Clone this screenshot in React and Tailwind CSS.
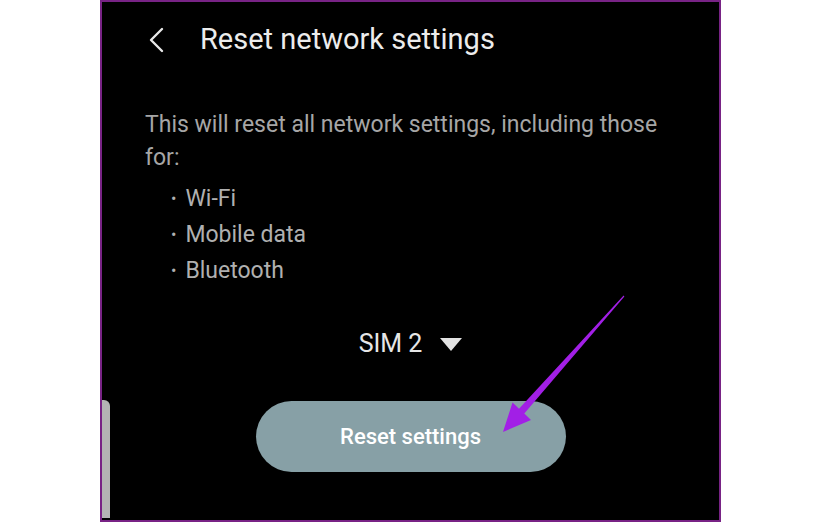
const App = () => {
  return (
    <div
      className="relative w-[822px] h-[522px] bg-white flex"
      style={{ fontFamily: "Roboto, 'Noto Sans', sans-serif" }}
    >
      {/* Phone screen */}
      <div className="relative ml-[100px] w-[621px] h-[522px] border-2 border-[#782385] bg-black flex flex-col">
        {/* Header */}
        <div className="h-[76px] flex items-center pl-[44px]">
          <svg width="22" height="28" viewBox="0 0 22 28" className="text-[#e8e8e8]">
            <path d="M16 3 L5 14 L16 25" fill="none" stroke="currentColor" strokeWidth="2.4" strokeLinecap="round" strokeLinejoin="round" />
          </svg>
          <h1 className="ml-[32px] text-[29px] text-[#ececec] font-normal">
            Reset network settings
          </h1>
        </div>

        {/* Description */}
        <p className="mt-[30px] pl-[43px] w-[575px] text-[23px] leading-[33px] text-[#a6a6a6]">
          This will reset all network settings, including those for:
        </p>

        <ul className="mt-[7px] pl-[69px] text-[23px] text-[#b0b0b0]">
          <li className="h-[36px] flex items-center"><span className="text-[16px] leading-none mr-[9px]">•</span>Wi-Fi</li>
          <li className="h-[36px] flex items-center"><span className="text-[16px] leading-none mr-[9px]">•</span>Mobile data</li>
          <li className="h-[36px] flex items-center"><span className="text-[16px] leading-none mr-[9px]">•</span>Bluetooth</li>
        </ul>

        {/* SIM selector */}
        <div className="mt-[35px] h-[40px] flex items-center justify-center gap-[18px]">
          <span className="text-[25px] text-[#e6e6e6]">SIM 2</span>
          <svg width="22" height="13" viewBox="0 0 22 13">
            <path d="M0 0 H22 L11 13 Z" fill="#e2e2e2" />
          </svg>
        </div>

        {/* Button */}
        <div className="mt-[37px] flex justify-center">
          <button className="w-[310px] h-[71px] rounded-full bg-[#87a0a6] text-white text-[22px] font-medium">
            Reset settings
          </button>
        </div>

        {/* Edge handle */}
        <div className="absolute left-0 top-[398px] w-[8px] h-[118px] bg-[#b4b4b4] rounded-tr-[6px]" />
      </div>

      {/* Annotation arrow */}
      <svg
        className="absolute left-0 top-0 pointer-events-none"
        width="822"
        height="522"
        viewBox="0 0 822 522"
      >
        <polygon
          points="624.4,296.4 524.3,413.6 531,420 503,432 512.5,402.5 519,408.8 623.6,295.6"
          fill="#a21fe6"
        />
      </svg>
    </div>
  );
};

export default App;
